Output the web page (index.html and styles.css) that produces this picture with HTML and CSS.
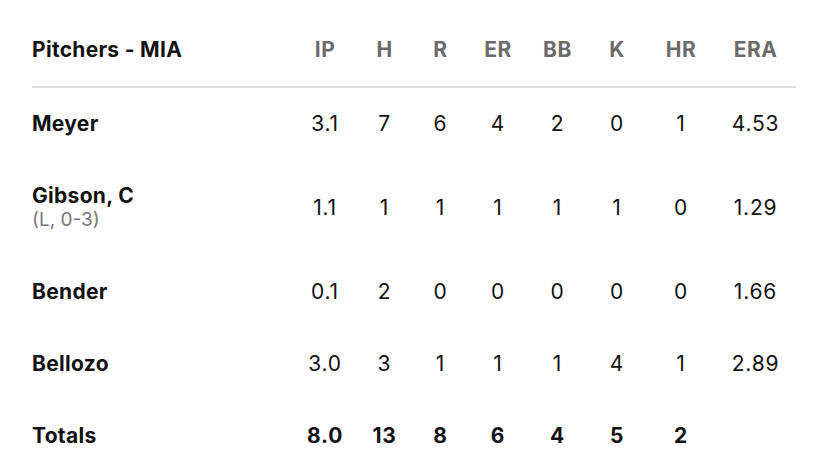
FILE: index.html
```html
<!DOCTYPE html>
<html lang="en">
<head>
    <meta charset="UTF-8">
    <meta name="viewport" content="width=device-width, initial-scale=1.0">
    <title>Pitchers - MIA</title>
<link rel="stylesheet" href="styles.css">
</head>
<body>
    <div class="box_score">
        <div class="row head">
            <div class="name">Pitchers - MIA</div>
            <div class="stat">IP</div>
            <div class="stat">H</div>
            <div class="stat">R</div>
            <div class="stat">ER</div>
            <div class="stat">BB</div>
            <div class="stat">K</div>
            <div class="stat">HR</div>
            <div class="stat">ERA</div>
        </div>

        <div class="row">
            <div class="name">Meyer</div>
            <div class="stat">3.1</div>
            <div class="stat">7</div>
            <div class="stat">6</div>
            <div class="stat">4</div>
            <div class="stat">2</div>
            <div class="stat">0</div>
            <div class="stat">1</div>
            <div class="stat">4.53</div>
        </div>

        <div class="row">
            <div class="name">Gibson, C<span class="note">(L, 0-3)</span></div>
            <div class="stat">1.1</div>
            <div class="stat">1</div>
            <div class="stat">1</div>
            <div class="stat">1</div>
            <div class="stat">1</div>
            <div class="stat">1</div>
            <div class="stat">0</div>
            <div class="stat">1.29</div>
        </div>

        <div class="row">
            <div class="name">Bender</div>
            <div class="stat">0.1</div>
            <div class="stat">2</div>
            <div class="stat">0</div>
            <div class="stat">0</div>
            <div class="stat">0</div>
            <div class="stat">0</div>
            <div class="stat">0</div>
            <div class="stat">1.66</div>
        </div>

        <div class="row">
            <div class="name">Bellozo</div>
            <div class="stat">3.0</div>
            <div class="stat">3</div>
            <div class="stat">1</div>
            <div class="stat">1</div>
            <div class="stat">1</div>
            <div class="stat">4</div>
            <div class="stat">1</div>
            <div class="stat">2.89</div>
        </div>

        <div class="row total">
            <div class="name">Totals</div>
            <div class="stat">8.0</div>
            <div class="stat">13</div>
            <div class="stat">8</div>
            <div class="stat">6</div>
            <div class="stat">4</div>
            <div class="stat">5</div>
            <div class="stat">2</div>
            <div class="stat"></div>
        </div>
    </div>
</body>
</html>
```

FILE: styles.css
```css
*{
  box-sizing: border-box;
}
body{
  margin: 0;
  background: #fff;
  color: #111;
  font-family: "Inter", "Noto Sans", sans-serif;
}
div.box_score{
  padding: 14px 32px 0;
}
div.row{
  display: grid;
  grid-template-columns: 262px 62px 57px 55px 60px 59px 60px 68px 81px;
  align-items: center;
  padding: 24px 0;
  font-size: 21px;
  line-height: 24px;
}
div.row.head{
  border-bottom: 2px solid #dedede;
}
div.row.head div.stat{
  color: #6b6b6b;
  font-weight: 700;
  letter-spacing: 0.5px;
}
div.row div.name{
  font-weight: 700;
  letter-spacing: 0.3px;
}
div.row div.stat{
  text-align: center;
  letter-spacing: 0.8px;
}
div.row.total div.stat{
  font-weight: 700;
}
span.note{
  display: block;
  color: #777;
  font-weight: 400;
  font-size: 19px;
  line-height: 24px;
  letter-spacing: 0;
}
```
